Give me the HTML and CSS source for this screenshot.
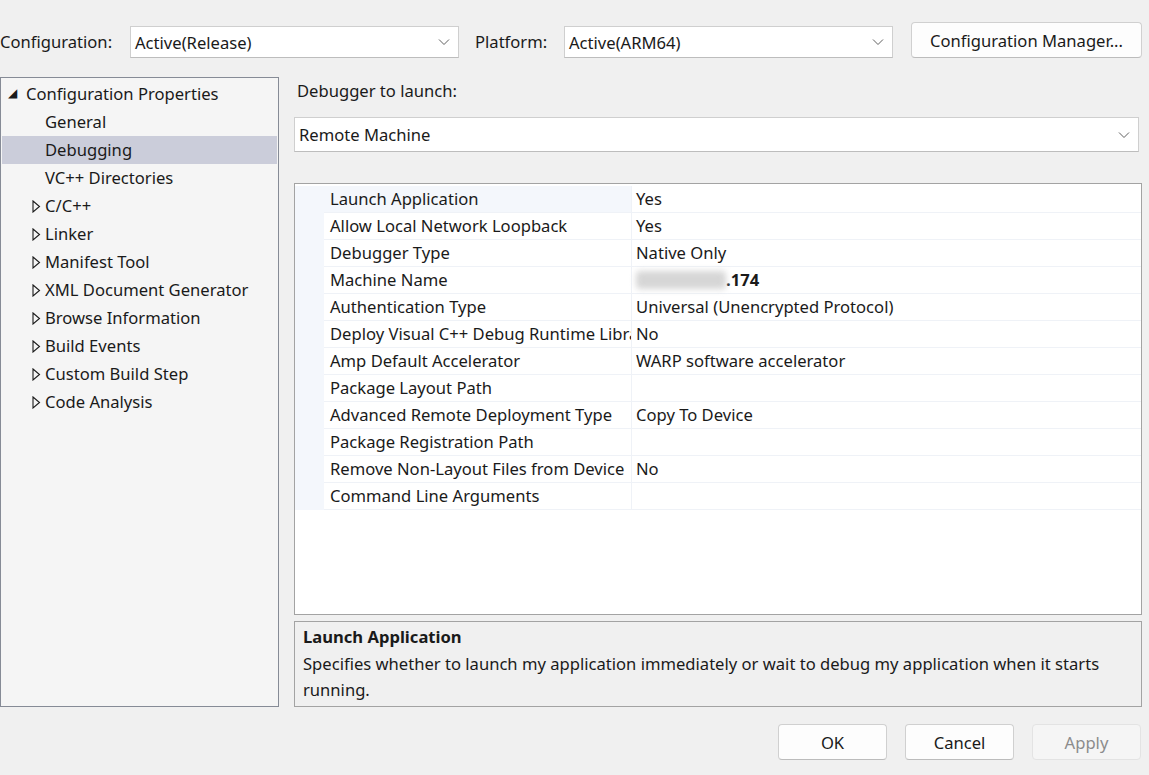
FILE: index.html
```html
<!DOCTYPE html>
<html>
<head>
<meta charset="utf-8">
<link rel="stylesheet" href="styles.css">
</head>
<body>
<div class="dialog">
  <div class="topbar">
    <span class="lbl lbl-config">Configuration:</span>
    <div class="combo combo-sm"><span>Active(Release)</span><svg class="chev" width="12" height="8" viewBox="0 0 12 8"><path d="M1 1.5 L6 6.5 L11 1.5" fill="none" stroke="#606060" stroke-width="1"/></svg></div>
    <span class="lbl lbl-plat">Platform:</span>
    <div class="combo combo-sm"><span>Active(ARM64)</span><svg class="chev" width="12" height="8" viewBox="0 0 12 8"><path d="M1 1.5 L6 6.5 L11 1.5" fill="none" stroke="#606060" stroke-width="1"/></svg></div>
    <button class="btn btn-cm">Configuration Manager...</button>
  </div>
  <div class="main">
    <div class="tree">
      <div class="node root"><span class="tw">&#9698;</span>Configuration Properties</div>
      <div class="node leaf">General</div>
      <div class="node leaf sel">Debugging</div>
      <div class="node leaf">VC++ Directories</div>
      <div class="node"><svg class="tri" width="9" height="13" viewBox="0 0 9 13"><path d="M1 1 L7.5 6.5 L1 12 Z" fill="none" stroke="#1a1a1a" stroke-width="1.1"/></svg>C/C++</div>
      <div class="node"><svg class="tri" width="9" height="13" viewBox="0 0 9 13"><path d="M1 1 L7.5 6.5 L1 12 Z" fill="none" stroke="#1a1a1a" stroke-width="1.1"/></svg>Linker</div>
      <div class="node"><svg class="tri" width="9" height="13" viewBox="0 0 9 13"><path d="M1 1 L7.5 6.5 L1 12 Z" fill="none" stroke="#1a1a1a" stroke-width="1.1"/></svg>Manifest Tool</div>
      <div class="node"><svg class="tri" width="9" height="13" viewBox="0 0 9 13"><path d="M1 1 L7.5 6.5 L1 12 Z" fill="none" stroke="#1a1a1a" stroke-width="1.1"/></svg>XML Document Generator</div>
      <div class="node"><svg class="tri" width="9" height="13" viewBox="0 0 9 13"><path d="M1 1 L7.5 6.5 L1 12 Z" fill="none" stroke="#1a1a1a" stroke-width="1.1"/></svg>Browse Information</div>
      <div class="node"><svg class="tri" width="9" height="13" viewBox="0 0 9 13"><path d="M1 1 L7.5 6.5 L1 12 Z" fill="none" stroke="#1a1a1a" stroke-width="1.1"/></svg>Build Events</div>
      <div class="node"><svg class="tri" width="9" height="13" viewBox="0 0 9 13"><path d="M1 1 L7.5 6.5 L1 12 Z" fill="none" stroke="#1a1a1a" stroke-width="1.1"/></svg>Custom Build Step</div>
      <div class="node"><svg class="tri" width="9" height="13" viewBox="0 0 9 13"><path d="M1 1 L7.5 6.5 L1 12 Z" fill="none" stroke="#1a1a1a" stroke-width="1.1"/></svg>Code Analysis</div>
    </div>
    <div class="right">
      <div class="dbg-label">Debugger to launch:</div>
      <div class="combo combo-wide"><span>Remote Machine</span><svg class="chev" width="12" height="8" viewBox="0 0 12 8"><path d="M1 1.5 L6 6.5 L11 1.5" fill="none" stroke="#606060" stroke-width="1"/></svg></div>
      <div class="grid">
        <div class="rows">
          <div class="row first"><div class="gut"></div><div class="name">Launch Application</div><div class="val">Yes</div></div>
          <div class="row"><div class="gut"></div><div class="name">Allow Local Network Loopback</div><div class="val">Yes</div></div>
          <div class="row"><div class="gut"></div><div class="name">Debugger Type</div><div class="val">Native Only</div></div>
          <div class="row"><div class="gut"></div><div class="name">Machine Name</div><div class="val"><span class="blur"></span><b class="ip">.174</b></div></div>
          <div class="row"><div class="gut"></div><div class="name">Authentication Type</div><div class="val">Universal (Unencrypted Protocol)</div></div>
          <div class="row"><div class="gut"></div><div class="name">Deploy Visual C++ Debug Runtime Libraries</div><div class="val">No</div></div>
          <div class="row"><div class="gut"></div><div class="name">Amp Default Accelerator</div><div class="val">WARP software accelerator</div></div>
          <div class="row"><div class="gut"></div><div class="name">Package Layout Path</div><div class="val"></div></div>
          <div class="row"><div class="gut"></div><div class="name">Advanced Remote Deployment Type</div><div class="val">Copy To Device</div></div>
          <div class="row"><div class="gut"></div><div class="name">Package Registration Path</div><div class="val"></div></div>
          <div class="row"><div class="gut"></div><div class="name">Remove Non-Layout Files from Device</div><div class="val">No</div></div>
          <div class="row"><div class="gut"></div><div class="name">Command Line Arguments</div><div class="val"></div></div>
        </div>
      </div>
      <div class="desc">
        <div class="desc-title">Launch Application</div>
        <div class="desc-text">Specifies whether to launch my application immediately or wait to debug my application when it starts running.</div>
      </div>
    </div>
  </div>
  <div class="footer">
    <button class="btn btn-f">OK</button>
    <button class="btn btn-f">Cancel</button>
    <button class="btn btn-f disabled">Apply</button>
  </div>
</div>
</body>
</html>
```
FILE: styles.css
```css
* { box-sizing: border-box; }
html, body { margin: 0; padding: 0; }
body {
  width: 1149px;
  height: 775px;
  background: #f0f0f0;
  font-family: "Noto Sans", "Open Sans", sans-serif;
  font-size: 16.6px;
  color: #1a1a1a;
  overflow: hidden;
}
.dialog { width: 1149px; height: 775px; display: flex; flex-direction: column; }

.topbar {
  display: flex;
  align-items: flex-end;
  padding-top: 22px;
  height: 58px;
  flex-shrink: 0;
}
.lbl { height: 32px; line-height: 32px; white-space: nowrap; }
.lbl-config { width: 130px; }
.lbl-plat { width: 89px; margin-left: 16px; }
.combo {
  background: #ffffff;
  border: 1px solid #cfcfcf;
  border-bottom-color: #bdbdbd;
  display: flex;
  align-items: center;
  justify-content: space-between;
  padding: 0 8px 0 4px;
  flex-shrink: 0;
}
.combo-sm { width: 329px; height: 32px; }
.combo-wide { width: 845px; height: 35px; margin-top: 12px; }
.chev { display: block; }
.btn {
  font-family: inherit;
  font-size: 16.6px;
  color: #1a1a1a;
  background: #fdfdfd;
  border: 1px solid #d0d0d0;
  border-bottom-color: #bcbcbc;
  border-radius: 4px;
  height: 36px;
  padding: 0;
  flex-shrink: 0;
}
.btn-cm { width: 231px; margin-left: 18px; }

.main {
  display: flex;
  margin-top: 19px;
  height: 630px;
  flex-shrink: 0;
}
.tree {
  width: 279px;
  height: 630px;
  background: #f5f5f5;
  border: 1px solid #868b96;
  padding-top: 2px;
  flex-shrink: 0;
}
.node {
  height: 28px;
  line-height: 28px;
  display: flex;
  align-items: center;
  padding-left: 31px;
  white-space: nowrap;
}
.node .tri { margin-right: 4px; }
.node.leaf { padding-left: 44px; }
.node.root { padding-left: 7px; }
.tw { font-size: 12px; width: 18px; display: inline-block; color: #1a1a1a; position: relative; top: -1px; }
.node.sel { background: #cbcdda; margin: 0 1px; padding-left: 43px; }

.right {
  margin-left: 15px;
  width: 848px;
  display: flex;
  flex-direction: column;
}
.dbg-label { height: 28px; line-height: 28px; padding-left: 3px; flex-shrink: 0; }
.grid {
  margin-top: 31px;
  height: 432px;
  flex-shrink: 0;
  background: #ffffff;
  border: 1px solid #a3a3a3;
  padding-top: 2px;
}
.row {
  display: flex;
  height: 27px;
  line-height: 26px;
}
.gut { width: 29px; background: #f4f7fc; flex-shrink: 0; }
.name {
  width: 308px;
  flex-shrink: 0;
  padding-left: 6px;
  border-bottom: 1px solid #eff2f7;
  border-right: 1px solid #eff2f7;
  white-space: nowrap;
  overflow: hidden;
}
.row.first .name { background: #f4f7fc; }
.val {
  flex: 1;
  padding-left: 4px;
  border-bottom: 1px solid #eff2f7;
  white-space: nowrap;
  display: flex;
  align-items: center;
}
.blur {
  display: inline-block;
  width: 90px;
  height: 18px;
  background: #d6d6d6;
  filter: blur(3px);
  border-radius: 4px;
}
.ip { font-weight: 700; }

.desc {
  margin-top: 6px;
  height: 86px;
  flex-shrink: 0;
  background: #f0f0f0;
  border: 1px solid #a3a3a3;
  padding: 3px 8px 0 8px;
}
.desc-title { font-weight: 700; line-height: 24px; }
.desc-text { line-height: 26px; margin-top: 2px; }

.footer {
  display: flex;
  justify-content: flex-end;
  padding-right: 8px;
  margin-top: 17px;
  gap: 18px;
}
.btn-f { width: 109px; }
.btn.disabled { background: #f5f5f5; color: #8c8c8c; border-color: #e3e3e3; }
```
